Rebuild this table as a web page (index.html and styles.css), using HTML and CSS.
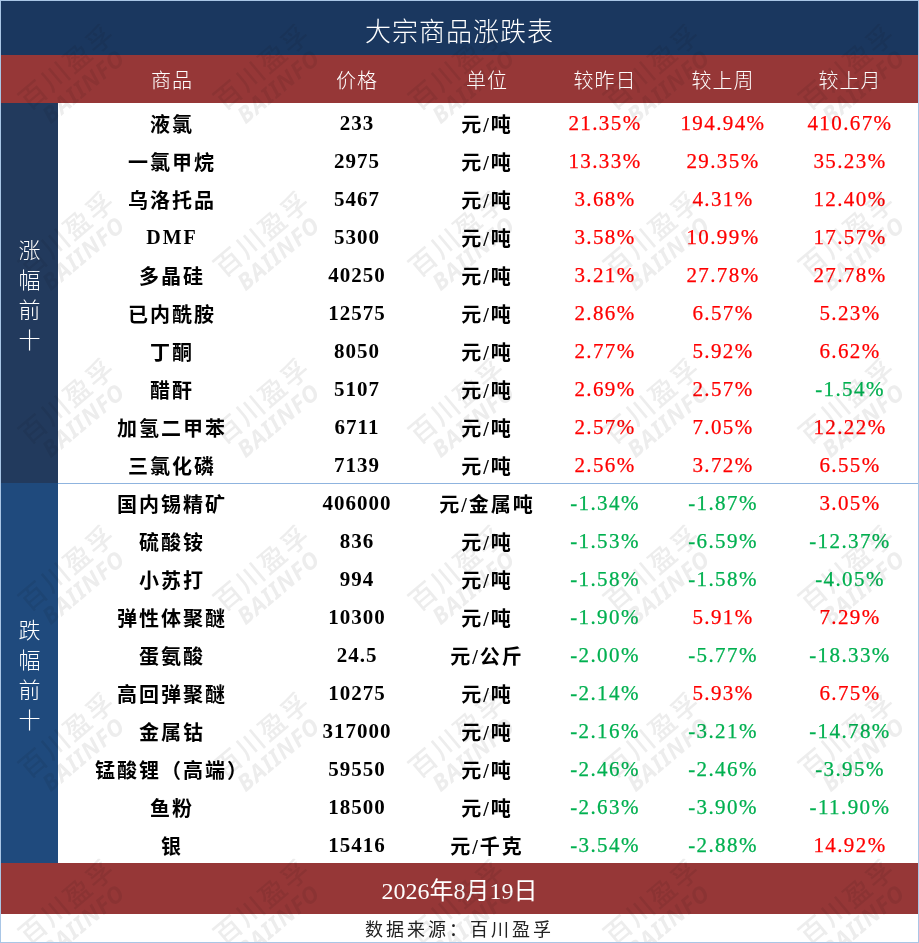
FILE: index.html
```html
<!DOCTYPE html>
<html lang="zh-CN">
<head>
<meta charset="utf-8">
<title>大宗商品涨跌表</title>
<link rel="stylesheet" href="styles.css">
</head>
<body>
<div class="sheet">
  <div class="title">大宗商品涨跌表</div>
  <div class="head">
    <span></span><span>商品</span><span>价格</span><span>单位</span><span>较昨日</span><span>较上周</span><span>较上月</span>
  </div>

  <div class="section up">
    <div class="side"><span>涨</span><span>幅</span><span>前</span><span>十</span></div>
    <div class="rows">
      <div class="row"><span class="name">液氯</span><span class="num">233</span><span class="unit">元/吨</span><span class="pct r">21.35%</span><span class="pct r">194.94%</span><span class="pct r">410.67%</span></div>
      <div class="row"><span class="name">一氯甲烷</span><span class="num">2975</span><span class="unit">元/吨</span><span class="pct r">13.33%</span><span class="pct r">29.35%</span><span class="pct r">35.23%</span></div>
      <div class="row"><span class="name">乌洛托品</span><span class="num">5467</span><span class="unit">元/吨</span><span class="pct r">3.68%</span><span class="pct r">4.31%</span><span class="pct r">12.40%</span></div>
      <div class="row"><span class="name">DMF</span><span class="num">5300</span><span class="unit">元/吨</span><span class="pct r">3.58%</span><span class="pct r">10.99%</span><span class="pct r">17.57%</span></div>
      <div class="row"><span class="name">多晶硅</span><span class="num">40250</span><span class="unit">元/吨</span><span class="pct r">3.21%</span><span class="pct r">27.78%</span><span class="pct r">27.78%</span></div>
      <div class="row"><span class="name">已内酰胺</span><span class="num">12575</span><span class="unit">元/吨</span><span class="pct r">2.86%</span><span class="pct r">6.57%</span><span class="pct r">5.23%</span></div>
      <div class="row"><span class="name">丁酮</span><span class="num">8050</span><span class="unit">元/吨</span><span class="pct r">2.77%</span><span class="pct r">5.92%</span><span class="pct r">6.62%</span></div>
      <div class="row"><span class="name">醋酐</span><span class="num">5107</span><span class="unit">元/吨</span><span class="pct r">2.69%</span><span class="pct r">2.57%</span><span class="pct g">-1.54%</span></div>
      <div class="row"><span class="name">加氢二甲苯</span><span class="num">6711</span><span class="unit">元/吨</span><span class="pct r">2.57%</span><span class="pct r">7.05%</span><span class="pct r">12.22%</span></div>
      <div class="row"><span class="name">三氯化磷</span><span class="num">7139</span><span class="unit">元/吨</span><span class="pct r">2.56%</span><span class="pct r">3.72%</span><span class="pct r">6.55%</span></div>
    </div>
  </div>

  <div class="section down">
    <div class="side"><span>跌</span><span>幅</span><span>前</span><span>十</span></div>
    <div class="rows">
      <div class="row"><span class="name">国内锡精矿</span><span class="num">406000</span><span class="unit">元/金属吨</span><span class="pct g">-1.34%</span><span class="pct g">-1.87%</span><span class="pct r">3.05%</span></div>
      <div class="row"><span class="name">硫酸铵</span><span class="num">836</span><span class="unit">元/吨</span><span class="pct g">-1.53%</span><span class="pct g">-6.59%</span><span class="pct g">-12.37%</span></div>
      <div class="row"><span class="name">小苏打</span><span class="num">994</span><span class="unit">元/吨</span><span class="pct g">-1.58%</span><span class="pct g">-1.58%</span><span class="pct g">-4.05%</span></div>
      <div class="row"><span class="name">弹性体聚醚</span><span class="num">10300</span><span class="unit">元/吨</span><span class="pct g">-1.90%</span><span class="pct r">5.91%</span><span class="pct r">7.29%</span></div>
      <div class="row"><span class="name">蛋氨酸</span><span class="num">24.5</span><span class="unit">元/公斤</span><span class="pct g">-2.00%</span><span class="pct g">-5.77%</span><span class="pct g">-18.33%</span></div>
      <div class="row"><span class="name">高回弹聚醚</span><span class="num">10275</span><span class="unit">元/吨</span><span class="pct g">-2.14%</span><span class="pct r">5.93%</span><span class="pct r">6.75%</span></div>
      <div class="row"><span class="name">金属钴</span><span class="num">317000</span><span class="unit">元/吨</span><span class="pct g">-2.16%</span><span class="pct g">-3.21%</span><span class="pct g">-14.78%</span></div>
      <div class="row"><span class="name">锰酸锂（高端）</span><span class="num">59550</span><span class="unit">元/吨</span><span class="pct g">-2.46%</span><span class="pct g">-2.46%</span><span class="pct g">-3.95%</span></div>
      <div class="row"><span class="name">鱼粉</span><span class="num">18500</span><span class="unit">元/吨</span><span class="pct g">-2.63%</span><span class="pct g">-3.90%</span><span class="pct g">-11.90%</span></div>
      <div class="row"><span class="name">银</span><span class="num">15416</span><span class="unit">元/千克</span><span class="pct g">-3.54%</span><span class="pct g">-2.88%</span><span class="pct r">14.92%</span></div>
    </div>
  </div>

  <div class="date">2026年8月19日</div>
  <div class="source">数据来源：百川盈孚</div>

  <div class="watermarks" aria-hidden="true">
    <div class="wm"><div class="wm-in"><span class="wm-cn">百川盈孚</span><span class="wm-en">BAIINFO</span></div></div>
    <div class="wm"><div class="wm-in"><span class="wm-cn">百川盈孚</span><span class="wm-en">BAIINFO</span></div></div>
    <div class="wm"><div class="wm-in"><span class="wm-cn">百川盈孚</span><span class="wm-en">BAIINFO</span></div></div>
    <div class="wm"><div class="wm-in"><span class="wm-cn">百川盈孚</span><span class="wm-en">BAIINFO</span></div></div>
    <div class="wm"><div class="wm-in"><span class="wm-cn">百川盈孚</span><span class="wm-en">BAIINFO</span></div></div>
    <div class="wm"><div class="wm-in"><span class="wm-cn">百川盈孚</span><span class="wm-en">BAIINFO</span></div></div>
    <div class="wm"><div class="wm-in"><span class="wm-cn">百川盈孚</span><span class="wm-en">BAIINFO</span></div></div>
    <div class="wm"><div class="wm-in"><span class="wm-cn">百川盈孚</span><span class="wm-en">BAIINFO</span></div></div>
    <div class="wm"><div class="wm-in"><span class="wm-cn">百川盈孚</span><span class="wm-en">BAIINFO</span></div></div>
    <div class="wm"><div class="wm-in"><span class="wm-cn">百川盈孚</span><span class="wm-en">BAIINFO</span></div></div>
    <div class="wm"><div class="wm-in"><span class="wm-cn">百川盈孚</span><span class="wm-en">BAIINFO</span></div></div>
    <div class="wm"><div class="wm-in"><span class="wm-cn">百川盈孚</span><span class="wm-en">BAIINFO</span></div></div>
    <div class="wm"><div class="wm-in"><span class="wm-cn">百川盈孚</span><span class="wm-en">BAIINFO</span></div></div>
    <div class="wm"><div class="wm-in"><span class="wm-cn">百川盈孚</span><span class="wm-en">BAIINFO</span></div></div>
    <div class="wm"><div class="wm-in"><span class="wm-cn">百川盈孚</span><span class="wm-en">BAIINFO</span></div></div>
    <div class="wm"><div class="wm-in"><span class="wm-cn">百川盈孚</span><span class="wm-en">BAIINFO</span></div></div>
    <div class="wm"><div class="wm-in"><span class="wm-cn">百川盈孚</span><span class="wm-en">BAIINFO</span></div></div>
    <div class="wm"><div class="wm-in"><span class="wm-cn">百川盈孚</span><span class="wm-en">BAIINFO</span></div></div>
    <div class="wm"><div class="wm-in"><span class="wm-cn">百川盈孚</span><span class="wm-en">BAIINFO</span></div></div>
    <div class="wm"><div class="wm-in"><span class="wm-cn">百川盈孚</span><span class="wm-en">BAIINFO</span></div></div>
    <div class="wm"><div class="wm-in"><span class="wm-cn">百川盈孚</span><span class="wm-en">BAIINFO</span></div></div>
    <div class="wm"><div class="wm-in"><span class="wm-cn">百川盈孚</span><span class="wm-en">BAIINFO</span></div></div>
    <div class="wm"><div class="wm-in"><span class="wm-cn">百川盈孚</span><span class="wm-en">BAIINFO</span></div></div>
    <div class="wm"><div class="wm-in"><span class="wm-cn">百川盈孚</span><span class="wm-en">BAIINFO</span></div></div>
    <div class="wm"><div class="wm-in"><span class="wm-cn">百川盈孚</span><span class="wm-en">BAIINFO</span></div></div>
    <div class="wm"><div class="wm-in"><span class="wm-cn">百川盈孚</span><span class="wm-en">BAIINFO</span></div></div>
    <div class="wm"><div class="wm-in"><span class="wm-cn">百川盈孚</span><span class="wm-en">BAIINFO</span></div></div>
    <div class="wm"><div class="wm-in"><span class="wm-cn">百川盈孚</span><span class="wm-en">BAIINFO</span></div></div>
    <div class="wm"><div class="wm-in"><span class="wm-cn">百川盈孚</span><span class="wm-en">BAIINFO</span></div></div>
    <div class="wm"><div class="wm-in"><span class="wm-cn">百川盈孚</span><span class="wm-en">BAIINFO</span></div></div>
    <div class="wm"><div class="wm-in"><span class="wm-cn">百川盈孚</span><span class="wm-en">BAIINFO</span></div></div>
    <div class="wm"><div class="wm-in"><span class="wm-cn">百川盈孚</span><span class="wm-en">BAIINFO</span></div></div>
    <div class="wm"><div class="wm-in"><span class="wm-cn">百川盈孚</span><span class="wm-en">BAIINFO</span></div></div>
    <div class="wm"><div class="wm-in"><span class="wm-cn">百川盈孚</span><span class="wm-en">BAIINFO</span></div></div>
    <div class="wm"><div class="wm-in"><span class="wm-cn">百川盈孚</span><span class="wm-en">BAIINFO</span></div></div>
    <div class="wm"><div class="wm-in"><span class="wm-cn">百川盈孚</span><span class="wm-en">BAIINFO</span></div></div>
  </div>
</div>
</body>
</html>
```

FILE: styles.css
```css
* { box-sizing: border-box; }

html, body {
  margin: 0;
  padding: 0;
  background: #ffffff;
}

.sheet {
  position: relative;
  width: 919px;
  height: 943px;
  border: 1px solid #a9c6e6;
  background: #ffffff;
  overflow: hidden;
  display: flex;
  flex-direction: column;
  font-family: "Liberation Serif", "Noto Sans CJK SC", serif;
}

.title {
  height: 54px;
  flex: none;
  background: #1a375f;
  color: #ffffff;
  font-family: "Noto Sans CJK SC", sans-serif;
  font-weight: 300;
  font-size: 26px;
  letter-spacing: 1px;
  display: flex;
  align-items: center;
  justify-content: center;
  padding-top: 2px;
}

.head {
  height: 48px;
  flex: none;
  background: #963737;
  color: #ffffff;
  display: grid;
  grid-template-columns: 57px 228px 142px 118px 118px 118px 136px;
  align-items: center;
  font-family: "Noto Sans CJK SC", sans-serif;
  font-weight: 300;
  font-size: 20px;
  letter-spacing: 1px;
}

.head span {
  text-align: center;
}

.section {
  height: 380px;
  flex: none;
  display: flex;
}

.side {
  width: 57px;
  flex: none;
  display: flex;
  flex-direction: column;
  align-items: center;
  justify-content: center;
  color: #ffffff;
  font-family: "Noto Sans CJK SC", sans-serif;
  font-weight: 300;
  font-size: 22px;
  line-height: 30px;
}

.up .side { background: #223a5d; }
.down .side { background: #1f4a7d; }

.rows {
  flex: 1;
  display: grid;
  grid-template-rows: repeat(10, 1fr);
}

.down .rows {
  border-top: 1px solid #8fb4df;
}

.row {
  display: grid;
  grid-template-columns: 228px 142px 118px 118px 118px 136px;
  align-items: center;
  padding-top: 2px;
}

.row span {
  text-align: center;
  white-space: nowrap;
}

.name, .unit {
  font-family: "Liberation Serif", "Noto Sans CJK SC", serif;
  font-weight: 700;
  font-size: 20px;
  letter-spacing: 2px;
  color: #000000;
}

.num {
  font-family: "Liberation Serif", serif;
  font-weight: 700;
  font-size: 21px;
  letter-spacing: 1px;
  color: #000000;
}

.pct {
  font-family: "Liberation Serif", serif;
  font-weight: 400;
  font-size: 21px;
  letter-spacing: 1.4px;
  -webkit-text-stroke: 0.25px currentColor;
}

.pct.r { color: #ff0000; }
.pct.g { color: #00b050; }

.date {
  height: 51px;
  flex: none;
  background: #963737;
  color: #ffffff;
  display: flex;
  align-items: center;
  justify-content: center;
  font-family: "Liberation Serif", "Noto Sans CJK SC", serif;
  font-size: 24px;
}

.source {
  flex: 1;
  display: flex;
  align-items: center;
  justify-content: center;
  font-family: "Noto Sans CJK SC", sans-serif;
  font-size: 18px;
  letter-spacing: 3px;
  color: #222222;
}

/* watermark overlay */
.watermarks {
  position: absolute;
  left: -25px;
  top: -10px;
  display: grid;
  grid-template-columns: repeat(6, 195px);
  grid-auto-rows: 167px;
  pointer-events: none;
  z-index: 5;
  mix-blend-mode: multiply;
}

.wm {
  display: flex;
  align-items: center;
  justify-content: center;
}

.wm-in {
  display: flex;
  flex-direction: column;
  align-items: center;
  transform: rotate(-40deg);
  color: #ededed;
  line-height: 1;
}

.wm-cn {
  font-family: "Noto Sans CJK SC", sans-serif;
  font-weight: 500;
  font-size: 27px;
  letter-spacing: 2px;
}

.wm-en {
  font-family: "Noto Sans", sans-serif;
  font-weight: 700;
  font-style: italic;
  font-size: 23px;
  letter-spacing: 1px;
  margin-top: 2px;
}
```
